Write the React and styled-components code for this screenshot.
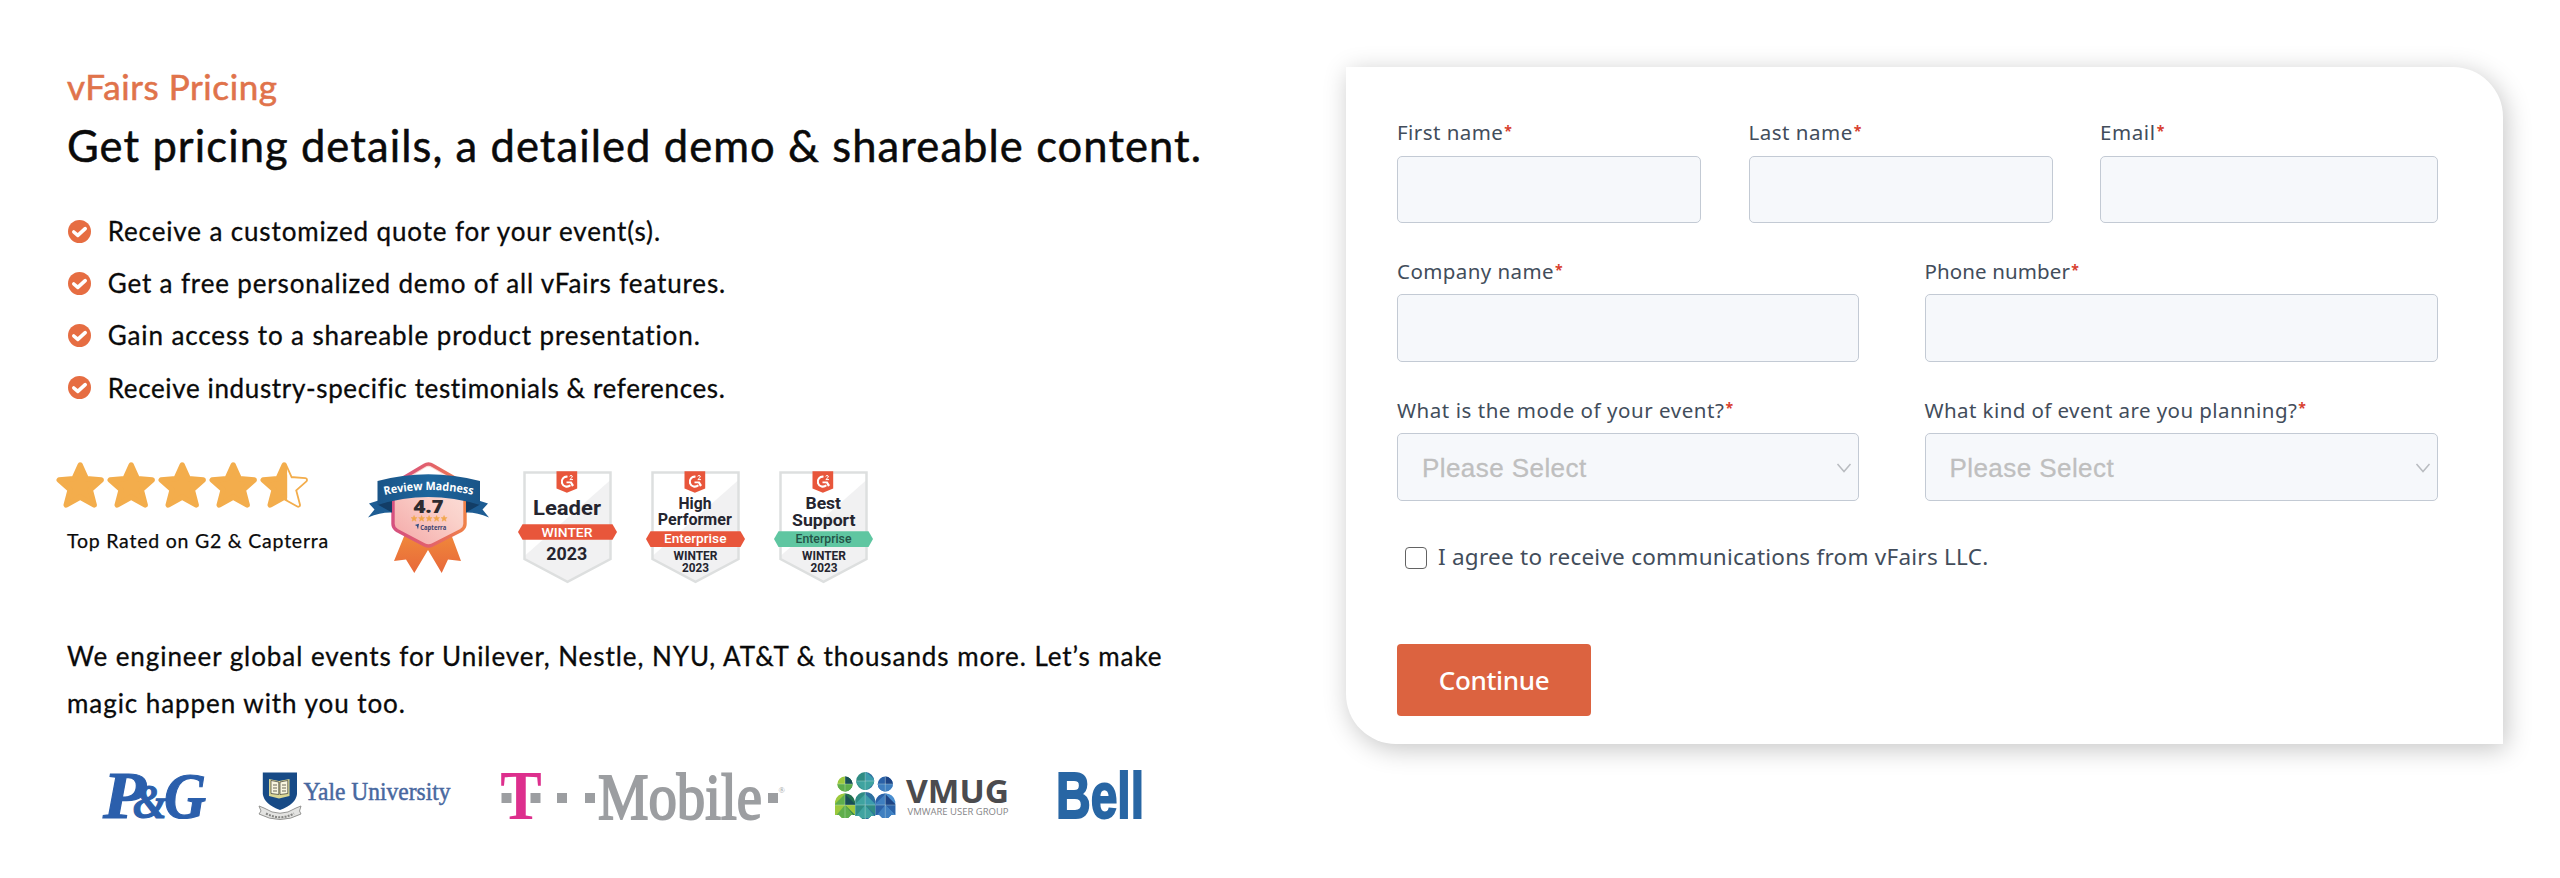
import React from "react";
import styled, { createGlobalStyle } from "styled-components";

const Global = createGlobalStyle`
  * { box-sizing: border-box; }
  body { margin: 0; background: #fff; overflow: hidden; }
`;

const Page = styled.main`
  display: flex;
  align-items: flex-start;
  width: 2560px;
  height: 878px;
  background: #fff;
  font-family: Lato, "Open Sans", sans-serif;
  color: #0a0a0a;
`;

const Intro = styled.section`
  width: 1346px;
  padding: 65px 0 0 67px;
`;

const Eyebrow = styled.p`
  margin: 0;
  font-size: 35px;
  line-height: 42px;
  letter-spacing: 0.6px;
  color: #e0734b;
  -webkit-text-stroke: 0.6px #e0734b;
`;

const Title = styled.h1`
  margin: 8px 0 30px;
  font-size: 43.5px;
  font-weight: 400;
  line-height: 60px;
  letter-spacing: 1.08px;
  white-space: nowrap;
  -webkit-text-stroke: 0.5px currentColor;
`;

const Benefits = styled.ul`
  list-style: none;
  margin: 0;
  padding: 0;
`;

const Benefit = styled.li`
  display: flex;
  align-items: center;
  gap: 17px;
  height: 52.2px;
  font-size: 26px;
  line-height: 52.2px;
  letter-spacing: ${(p) => p.$track}px;
  white-space: nowrap;
  -webkit-text-stroke: 0.3px currentColor;
`;

const CheckIcon = styled.svg`
  width: 23px;
  height: 23px;
  flex: none;
  margin-left: 0.7px;
`;

const Awards = styled.div`
  display: flex;
  align-items: flex-start;
  margin: 48px 0 0 -11px;
  height: 121px;
`;

const Rating = styled.div`
  width: 312px;
`;

const Stars = styled.svg`
  display: block;
  width: 254px;
  height: 46px;
`;

const RatingText = styled.p`
  margin: 18px 0 0 11px;
  font-size: 19.5px;
  line-height: 30px;
  letter-spacing: 0.78px;
  -webkit-text-stroke: 0.25px currentColor;
`;

const ReviewArt = styled.svg`
  width: 121px;
  height: 112px;
  margin-right: 29px;
`;

const BadgeArt = styled.svg`
  width: 100px;
  height: 114px;
  margin: 9px 28px 0 0;
`;

const Pitch = styled.p`
  width: 1130px;
  margin: 50px 0 0;
  font-size: 26px;
  line-height: 47.4px;
  letter-spacing: 0.94px;
  -webkit-text-stroke: 0.3px currentColor;
`;

const Logos = styled.div`
  display: flex;
  gap: 50px;
  margin: 44.2px 0 0 35px;
`;

const Logo = styled.svg`
  width: ${(p) => p.$w}px;
  height: 48px;
  flex: none;
  overflow: visible;
`;

const Card = styled.form`
  width: 1157px;
  height: 677px;
  margin-top: 67.3px;
  padding: 51px 65px 0 51px;
  border-radius: 0 50px 0 50px;
  background: #fff;
  box-shadow: 3px 5px 26px rgba(0, 0, 0, 0.23);
  font-family: "Noto Sans", sans-serif;
  color: #424d5b;
`;

const Row = styled.div`
  display: grid;
  grid-template-columns: ${(p) => p.$cols};
  column-gap: ${(p) => p.$gap}px;
  margin-bottom: 33.8px;
`;

const Field = styled.label`
  display: flex;
  flex-direction: column;
  gap: 9.4px;
`;

const FieldName = styled.span`
  height: 28px;
  font-size: 20.5px;
  line-height: 28px;
  letter-spacing: ${(p) => p.$track}px;
  white-space: nowrap;
`;

const Required = styled.span`
  margin-left: 1px;
  font-size: 14px;
  font-weight: 700;
  line-height: 0;
  vertical-align: 4.5px;
  letter-spacing: 0;
  color: #d8402f;
`;

const TextInput = styled.input`
  width: 100%;
  height: 67.6px;
  padding: 0 24px;
  border: 1px solid #c3cad4;
  border-radius: 5px;
  background: #f6f8fb;
`;

const Select = styled.div`
  display: flex;
  align-items: center;
  justify-content: space-between;
  height: 67.6px;
  padding: 1px 6px 0 24px;
  border: 1px solid #c3cad4;
  border-radius: 5px;
  background: #f6f8fb;
  font: 26px/30px "Liberation Sans", Arial, sans-serif;
  letter-spacing: 0.43px;
  color: #bfbfbf;
  -webkit-text-stroke: 0.3px currentColor;
`;

const Chevron = styled.svg`
  width: 16px;
  height: 10px;
`;

const Consent = styled.label`
  display: flex;
  align-items: center;
  gap: 11px;
  height: 30px;
  margin: 40.8px 0 72.8px 8px;
  font-size: 22.5px;
  line-height: 30px;
  letter-spacing: 0.25px;
`;

const Checkbox = styled.input`
  appearance: none;
  width: 22px;
  height: 22px;
  margin: 2px 0 0;
  border: 1px solid #636363;
  border-radius: 4px;
  background: #fff;
`;

const Submit = styled.button`
  width: 194px;
  height: 71.4px;
  padding: 0;
  border: 0;
  border-radius: 4px;
  background: #dc6340;
  color: #fff;
  font: 500 26px "Noto Sans", sans-serif;
  letter-spacing: -0.33px;
`;

const INK = "#25252f";
const STAR =
  "M24 3 L30.2 16.8 L45 18 L34 27.8 L38 43 L24 35.2 L10 43 L14 27.8 L3 18 L17.8 16.8 Z";

function Words({ x, y, w, children, ...rest }) {
  return (
    <text x={x} y={y} textLength={w} lengthAdjust="spacingAndGlyphs" {...rest}>
      {children}
    </text>
  );
}

function StarRating() {
  return (
    <Stars viewBox="0 0 254 46">
      <defs>
        <clipPath id="rightHalf">
          <rect x="27" y="-5" width="30" height="60" />
        </clipPath>
      </defs>
      {[0, 1, 2, 3, 4].map((i) => (
        <g key={i} transform={`translate(${i * 51 + 0.2} 0)`}>
          <path d={STAR} fill="#f3ad4c" stroke="#f3ad4c" strokeWidth="5.4" strokeLinejoin="round" />
          {i === 4 && (
            <path d={STAR} fill="#fff" stroke="#fff" strokeWidth="1.800" strokeLinejoin="round" clipPath="url(#rightHalf)" />
          )}
        </g>
      ))}
    </Stars>
  );
}

function ReviewBadge() {
  return (
    <ReviewArt viewBox="0 0 121 112">
      <defs>
        <linearGradient id="rim">
          <stop offset="0" stopColor="#d5517f" />
          <stop offset="0.5" stopColor="#e2606c" />
          <stop offset="1" stopColor="#ef8048" />
        </linearGradient>
        <linearGradient id="face" x1="0" y1="1" x2="0.8" y2="0">
          <stop offset="0" stopColor="#f4a6a6" />
          <stop offset="0.6" stopColor="#fad0c9" />
          <stop offset="1" stopColor="#fbe3dd" />
        </linearGradient>
        <linearGradient id="tail" x1="0" y1="0" x2="0" y2="1">
          <stop offset="0" stopColor="#f0893b" />
          <stop offset="1" stopColor="#e8683a" />
        </linearGradient>
        <linearGradient id="band">
          <stop offset="0" stopColor="#1a5487" />
          <stop offset="0.5" stopColor="#1d669d" />
          <stop offset="1" stopColor="#1a5487" />
        </linearGradient>
        <path id="bandLine" d="M16.5 33 Q60 23 106 33" />
      </defs>
      <path d="M37 72 L26 99 L38 97.5 L46.3 111 L60 88 L73.7 111 L80 97.5 L93 99 L83 72 Z" fill="url(#tail)" />
      <path d="M56 3.5 Q60.5 0.5 65 3.5 L92 19 Q97 22 97 27 V62 Q97 66 93 68.5 L64.5 83 Q60.5 85 56.5 83 L29 68.5 Q25 66 25 62 V27 Q25 22 30 19 Z" fill="url(#face)" stroke="url(#rim)" strokeWidth="3.4" />
      <path d="M36 19 L57 6 Q60.5 4 64 6 L86 19 Z" fill="#fff" />
      <path d="M12 38 L1 41.5 L6.5 47.5 L0 55.5 Q13 50 24 50.5 V38 Z" fill="#1d5c93" />
      <path d="M109 38 L120 41.5 L114.5 47.5 L121 55.5 Q108 50 98 50.5 V38 Z" fill="#1d5c93" />
      <path d="M9.5 42.5 L24 50.5 V38 Z M112 42.5 L98 50.5 V38 Z" fill="#123d66" />
      <path d="M9.5 19 Q60 5.5 112 19 V43 Q60 27 9.5 43 Z" fill="url(#band)" />
      <text fontFamily="'Open Sans'" fontWeight="700" fontSize="11.5" fill="#fff">
        <textPath href="#bandLine" textLength="89" lengthAdjust="spacingAndGlyphs">Review Madness</textPath>
      </text>
      <Words x="45.5" y="50.5" w="30" fontFamily="'Open Sans'" fontWeight="800" fontSize="18" fill="#2e2b2f">4.7</Words>
      {[0, 1, 2, 3, 4].map((i) => (
        <path key={i} d={STAR} fill="#f1a64c" stroke="#f1a64c" strokeWidth="3" transform={`translate(${42.6 + i * 7.5} 53) scale(0.145)`} />
      ))}
      <path d="M46.8 63 L51 61.8 L50 67.5 L48.8 64 Z" fill="#2b4a80" />
      <Words x="52.3" y="67.5" w="26" fontFamily="'Open Sans'" fontWeight="700" fontSize="7" fill="#3b4370">Capterra</Words>
    </ReviewArt>
  );
}

function AwardBadge({ band, bandY, children }) {
  return (
    <BadgeArt viewBox="0 0 100 114" fontFamily="Roboto" fontWeight="700" fill={INK}>
      <path d="M6.5 1.5 H92.5 V88 L49.5 110.8 L6.5 88 Z" fill="#fff" />
      <path d="M92.5 9 V88 L49.5 110.8 L6.5 88 V85 Z" fill="#f1f1f2" />
      <path d="M6.5 1.5 H92.5 V88 L49.5 110.8 L6.5 88 Z" fill="none" stroke="#dddfdf" strokeWidth="2.5" />
      <path d="M38.5 0.2 H59.2 V17.5 L48.9 21.8 L38.5 17.5 Z" fill="#e8563b" />
      <path d="M49.5 5.7 A5 5 0 1 0 52.3 14.2" fill="none" stroke="#fff" strokeWidth="2.1" />
      <path d="M48.5 10.4 H53.6 L56 14.3 L54 15.8 L52.2 12.3 H48.5 Z" fill="#fff" />
      <path d="M51.6 5.3 Q53.2 3.6 54.3 5 Q54.7 6.4 51.8 8.6 H55" fill="none" stroke="#fff" strokeWidth="1" />
      <path d={`M0 ${bandY + 7.8} L4.5 ${bandY} H94.5 L99 ${bandY + 7.8} L94.5 ${bandY + 15.6} H4.5 Z`} fill={band} />
      {children}
    </BadgeArt>
  );
}

function AwardList() {
  return (
    <>
      <AwardBadge band="#e8563b" bandY={53.2}>
        <Words x="15" y="44.3" w="68" fontSize="20">Leader</Words>
        <Words x="23.5" y="66" w="51" fontSize="13.5" fontWeight="500" fill="#fff">WINTER</Words>
        <Words x="28.3" y="89.3" w="41" fontSize="19">2023</Words>
      </AwardBadge>
      <AwardBadge band="#e8563b" bandY={60.3}>
        <Words x="32.5" y="38" w="33" fontSize="16">High</Words>
        <Words x="11.8" y="54.2" w="74" fontSize="16">Performer</Words>
        <Words x="18" y="71.7" w="62.5" fontSize="12.7" fontWeight="500" fill="#fff">Enterprise</Words>
        <Words x="27.5" y="89" w="44" fontSize="12.5">WINTER</Words>
        <Words x="36" y="100.8" w="27" fontSize="12.5">2023</Words>
      </AwardBadge>
      <AwardBadge band="#5fc6a1" bandY={60.3}>
        <Words x="31.5" y="37.5" w="35.5" fontSize="16">Best</Words>
        <Words x="18" y="54.7" w="63.5" fontSize="16">Support</Words>
        <Words x="21.5" y="71.7" w="56" fontSize="12.7" fontWeight="500" fill="#235247">Enterprise</Words>
        <Words x="28" y="89" w="44" fontSize="12.5">WINTER</Words>
        <Words x="36.5" y="100.8" w="27" fontSize="12.5">2023</Words>
      </AwardBadge>
    </>
  );
}

function PgLogo() {
  return (
    <Logo $w={106} viewBox="0 0 106 48" fontFamily="'Liberation Serif'" fontWeight="700" fontStyle="italic" fill="#2b5fac" stroke="#2b5fac" strokeWidth="1.2">
      <Words x="1" y="46" w="43" fontSize="68">P</Words>
      <Words x="31" y="46" w="34" fontSize="49">&amp;</Words>
      <Words x="62" y="46" w="42" fontSize="66">G</Words>
    </Logo>
  );
}

function YaleLogo() {
  return (
    <Logo $w={193} viewBox="0 0 193 48">
      <path d="M4.8 0.5 H39 V22 Q38 32 22 38 Q6 32 4.8 22 Z" fill="#174a86" />
      <path d="M11 7 L21 9 L31.500 7 V24 L21 26.5 L11 24 Z" fill="#d9d694" />
      <path d="M13 8.5 L20.8 10 V22.5 L13 21.5 Z M22 10 L29.8 8.5 V21.5 L22 22.5 Z" fill="#f8f6df" stroke="#3b3b35" strokeWidth="0.7" />
      <path d="M15 13 H19 M15 16 H19 M15 19 H19 M24 13 H28 M24 16 H28 M24 19 H28" stroke="#6b695a" strokeWidth="1.2" />
      <path d="M1 34 L6 36 Q22 46.5 38 36 L43 34 L41.5 39 L43 42 Q22 53 1 42 L3 39 Z" fill="#e3e3e1" stroke="#8a8a88" strokeWidth="0.9" />
      <path d="M8 41.5 Q22 49 36 41.5" fill="none" stroke="#858582" strokeWidth="2" strokeDasharray="2 1.2" />
      <Words x="45.5" y="28" w="147" fontFamily="'Liberation Serif'" fontSize="26" fill="#48689f" stroke="#48689f" strokeWidth="0.5">Yale University</Words>
    </Logo>
  );
}

function TMobileLogo() {
  return (
    <Logo $w={284} viewBox="0 0 284 48" fontFamily="'Liberation Serif'">
      <g fill="#9c9ea1">
        <rect x="0.5" y="21" width="10" height="10" />
        <rect x="29.5" y="21" width="10" height="10" />
        <rect x="56" y="21" width="10" height="10" />
        <rect x="84" y="21" width="10" height="10" />
        <rect x="267" y="21" width="10" height="10" />
      </g>
      <Words x="-0.8" y="46.5" w="41.5" fontSize="69" fontWeight="700" fill="#dd2f8d">T</Words>
      <Words x="97" y="46.5" w="164" fontSize="66" fill="#9c9ea1" stroke="#9c9ea1" strokeWidth="2">Mobile</Words>
      <text x="277.5" y="20.5" fontSize="8.5" fill="#9c9ea1">®</text>
    </Logo>
  );
}

function Figure({ cx, head, r, top, bottom, colors, id }) {
  const [a, b, c, d] = colors;
  return (
    <>
      <clipPath id={id}>
        <circle cx={cx} cy={head} r={r} />
        <path d={`M${cx - 10} ${bottom} V${top + 8} Q${cx - 8} ${top} ${cx} ${top} Q${cx + 8} ${top} ${cx + 10} ${top + 8} V${bottom} L${cx + 6} ${bottom} L${cx + 3} ${bottom + 3} H${cx - 3} L${cx - 6} ${bottom} Z`} />
      </clipPath>
      <g clipPath={`url(#${id})`}>
        <rect x={cx - 11} y="-2" width="11" height="52" fill={a} />
        <rect x={cx} y="-2" width="11" height="52" fill={b} />
        <path d={`M${cx - 11} ${head} H${cx + 11} L${cx} ${head + 11} Z`} fill={c} />
        <path d={`M${cx} ${head - 10} L${cx + 11} ${head} H${cx} Z`} fill={d} />
        <path d={`M${cx - 11} 33 L${cx} 22 V33 Z`} fill={c} />
        <path d={`M${cx} 22 L${cx + 11} 33 H${cx} Z`} fill={d} />
        <path d={`M${cx - 11} 46 L${cx} 33 L${cx + 11} 46 Z`} fill={c} />
        <path d={`M${cx} 33 H${cx + 11} V44 Z`} fill={a} />
        <path d={`M${cx} -2 V50 M${cx - 11} ${head} H${cx + 11} M${cx - 11} 33 H${cx + 11}`} stroke="#dff0e6" strokeOpacity="0.55" strokeWidth="0.6" />
      </g>
    </>
  );
}

function VmugLogo() {
  return (
    <Logo $w={174} viewBox="0 0 174 48" fontFamily="'Open Sans'">
      <Figure id="figLeft" cx={10} head={12} r={7.6} top={21.5} bottom={43} colors={["#9cc93d", "#23704f", "#5fae4c", "#184f55"]} />
      <Figure id="figRight" cx={50.3} head={12} r={7.6} top={21.5} bottom={43} colors={["#2b62a8", "#4a8fd0", "#3f7fc0", "#1d4485"]} />
      <Figure id="figMid" cx={30.2} head={9} r={9} top={20} bottom={44} colors={["#2f8c84", "#2d6f9f", "#3fa3a0", "#3c9dac"]} />
      <Words x="71" y="31" w="103" fontSize="33" fontWeight="700" fill="#4b4b4e">VMUG</Words>
      <Words x="72.5" y="43.2" w="101" fontSize="8.8" fill="#858587">VMWARE USER GROUP</Words>
    </Logo>
  );
}

function BellLogo() {
  return (
    <Logo $w={84} viewBox="0 0 84 48">
      <Words x="-3" y="46" w="88" fontFamily="'Liberation Sans'" fontWeight="700" fontSize="64" fill="#2866a4" stroke="#2866a4" strokeWidth="2">Bell</Words>
    </Logo>
  );
}

const benefits = [
  ["Receive a customized quote for your event(s).", 0.87],
  ["Get a free personalized demo of all vFairs features.", 0.86],
  ["Gain access to a shareable product presentation.", 0.89],
  ["Receive industry-specific testimonials & references.", 0.64],
];

const rows = [
  {
    cols: "304px 304px 338px",
    gap: 47.5,
    fields: [["First name", 0.45], ["Last name", 0.5], ["Email", 0.6]],
  },
  {
    cols: "462px 513.5px",
    gap: 65.5,
    fields: [["Company name", 0.42], ["Phone number", 0.12]],
  },
  {
    cols: "462px 513.5px",
    gap: 65.5,
    select: true,
    fields: [["What is the mode of your event?", 0.54], ["What kind of event are you planning?", 0.42]],
  },
];

export default function App() {
  return (
    <Page>
      <Global />
      <Intro>
        <Eyebrow>vFairs Pricing</Eyebrow>
        <Title>Get pricing details, a detailed demo &amp; shareable content.</Title>
        <Benefits>
          {benefits.map(([text, track]) => (
            <Benefit key={text} $track={track}>
              <CheckIcon viewBox="0 0 23 23">
                <circle cx="11.5" cy="11.5" r="11.5" fill="#e66d42" />
                <path d="M5.8 12 L9.8 15.4 L17.2 8.6" fill="none" stroke="#fff" strokeWidth="3.6" strokeLinecap="round" strokeLinejoin="round" />
              </CheckIcon>
              {text}
            </Benefit>
          ))}
        </Benefits>
        <Awards>
          <Rating>
            <StarRating />
            <RatingText>Top Rated on G2 &amp; Capterra</RatingText>
          </Rating>
          <ReviewBadge />
          <AwardList />
        </Awards>
        <Pitch>
          We engineer global events for Unilever, Nestle, NYU, AT&amp;T &amp; thousands more. Let’s make magic happen with you too.
        </Pitch>
        <Logos>
          <PgLogo />
          <YaleLogo />
          <TMobileLogo />
          <VmugLogo />
          <BellLogo />
        </Logos>
      </Intro>
      <Card>
        {rows.map((row, i) => (
          <Row key={i} $cols={row.cols} $gap={row.gap}>
            {row.fields.map(([name, track]) => (
              <Field key={name}>
                <FieldName $track={track}>
                  {name}
                  <Required>*</Required>
                </FieldName>
                {row.select ? (
                  <Select>
                    Please Select
                    <Chevron viewBox="0 0 16 10">
                      <path d="M1.5 1 L8 8.5 L14.5 1" fill="none" stroke="#b9bcc0" strokeWidth="1.5" />
                    </Chevron>
                  </Select>
                ) : (
                  <TextInput />
                )}
              </Field>
            ))}
          </Row>
        ))}
        <Consent>
          <Checkbox type="checkbox" />
          I agree to receive communications from vFairs LLC.
        </Consent>
        <Submit type="button">Continue</Submit>
      </Card>
    </Page>
  );
}
